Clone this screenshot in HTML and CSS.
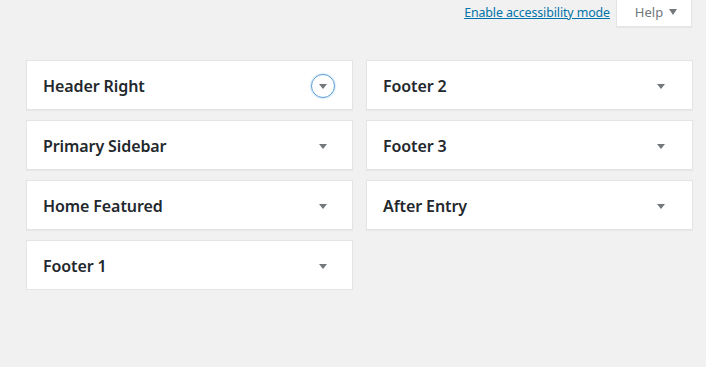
FILE: index.html
```html
<!DOCTYPE html>
<html>
<head>
<meta charset="utf-8">
<link rel="stylesheet" href="styles.css">
</head>
<body>
<div class="topbar">
  <a class="a11y" href="#">Enable accessibility mode</a>
  <button class="help">Help <span class="help-arrow"></span></button>
</div>
<div class="columns">
  <div class="col">
    <div class="widget"><span class="title">Header Right</span><span class="toggle focused"><span class="arrow"></span></span></div>
    <div class="widget"><span class="title">Primary Sidebar</span><span class="toggle"><span class="arrow"></span></span></div>
    <div class="widget"><span class="title">Home Featured</span><span class="toggle"><span class="arrow"></span></span></div>
    <div class="widget"><span class="title">Footer 1</span><span class="toggle"><span class="arrow"></span></span></div>
  </div>
  <div class="col col-right">
    <div class="widget"><span class="title">Footer 2</span><span class="toggle"><span class="arrow"></span></span></div>
    <div class="widget"><span class="title">Footer 3</span><span class="toggle"><span class="arrow"></span></span></div>
    <div class="widget"><span class="title">After Entry</span><span class="toggle"><span class="arrow"></span></span></div>
  </div>
</div>
</body>
</html>
```

FILE: styles.css
```css
html, body {
  margin: 0;
  padding: 0;
  background: #f1f1f1;
  font-family: "Noto Sans", "Open Sans", sans-serif;
  color: #23282d;
}
.topbar {
  display: flex;
  justify-content: flex-end;
  align-items: flex-start;
  padding-right: 14px;
  height: 60px;
  box-sizing: border-box;
}
.a11y {
  font-size: 12.4px;
  letter-spacing: -0.1px;
  color: #0073aa;
  text-decoration: underline;
  margin-top: 4px;
  margin-right: 6px;
  line-height: 18px;
}
.help {
  width: 76px;
  height: 27px;
  background: #fff;
  border: 1px solid #e2e4e7;
  border-top: none;
  box-shadow: 0 1px 1px rgba(0,0,0,0.04);
  font-family: inherit;
  font-size: 13px;
  color: #72777c;
  padding: 0 0 2px 4px;
  display: flex;
  align-items: center;
  justify-content: center;
  gap: 6px;
}
.help-arrow {
  width: 0;
  height: 0;
  border-left: 4px solid transparent;
  border-right: 4px solid transparent;
  border-top: 6px solid #72777c;
  margin-top: -1px;
}
.columns {
  display: flex;
  gap: 13px;
  padding-left: 26px;
}
.col {
  width: 327px;
  display: flex;
  flex-direction: column;
  gap: 10px;
}
.widget {
  height: 50px;
  box-sizing: border-box;
  background: #fff;
  border: 1px solid #e2e4e7;
  box-shadow: 0 1px 1px rgba(0,0,0,0.04);
  display: flex;
  align-items: center;
  justify-content: space-between;
  padding: 0 17px 0 16px;
}
.col-right .widget {
  padding-right: 19px;
}
.title {
  font-size: 16px;
  font-weight: 600;
  margin-top: 1px;
  letter-spacing: -0.1px;
}
.toggle {
  width: 24px;
  height: 24px;
  box-sizing: border-box;
  border-radius: 50%;
  display: flex;
  align-items: center;
  justify-content: center;
  border: 1px solid transparent;
  margin-top: 1px;
}
.toggle.focused {
  border: 1px solid #5b9dd9;
  box-shadow: 0 0 2px rgba(30,140,190,0.5);
}
.arrow {
  width: 0;
  height: 0;
  border-left: 4px solid transparent;
  border-right: 4px solid transparent;
  border-top: 5px solid #72777c;
  margin-top: 2px;
}
```
